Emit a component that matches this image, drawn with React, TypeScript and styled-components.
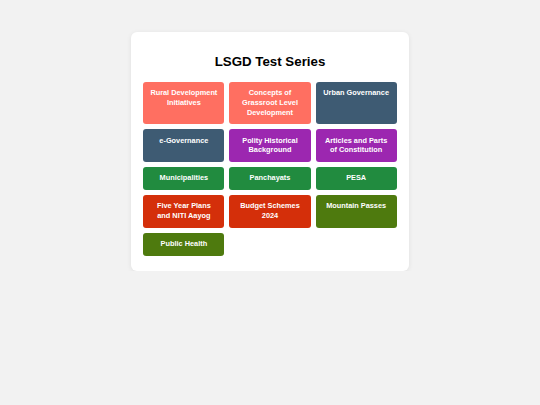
import React from 'react';
import styled, {createGlobalStyle} from 'styled-components';

type Tone = 'coral' | 'slate' | 'violet' | 'green' | 'red' | 'olive';

const tones: Record<Tone, string> = {
    coral: '#ff6f61',
    slate: '#3e5b73',
    violet: '#9c27b0',
    green: '#218b3f',
    red: '#d42f0a',
    olive: '#4e7a0e',
};

const topics: {label: string, tone: Tone}[] = [
    {label: 'Rural Development Initiatives', tone: 'coral'},
    {label: 'Concepts of Grassroot Level Development', tone: 'coral'},
    {label: 'Urban Governance', tone: 'slate'},
    {label: 'e-Governance', tone: 'slate'},
    {label: 'Polity Historical Background', tone: 'violet'},
    {label: 'Articles and Parts of Constitution', tone: 'violet'},
    {label: 'Municipalities', tone: 'green'},
    {label: 'Panchayats', tone: 'green'},
    {label: 'PESA', tone: 'green'},
    {label: 'Five Year Plans and NITI Aayog', tone: 'red'},
    {label: 'Budget Schemes 2024', tone: 'red'},
    {label: 'Mountain Passes', tone: 'olive'},
    {label: 'Public Health', tone: 'olive'},
];

const GlobalStyle = createGlobalStyle`
    html, body {
        margin: 0;
        background: #f2f2f2;
        font-family: "Liberation Sans", Arial, sans-serif;
    }
`;

const Page = styled.div`
    display: flex;
    justify-content: center;
    padding-top: 32px;
`;

const Card = styled.div`
    width: 278px;
    box-sizing: border-box;
    padding: 12px 12.3px 15.5px;
    background: #fff;
    border-radius: 6px;
    box-shadow: 0 1px 5px rgba(0, 0, 0, 0.08);
`;

const Title = styled.h1`
    margin: 10px 0 11.5px;
    font-size: 13.3px;
    line-height: 16px;
    font-weight: bold;
    color: #000;
    text-align: center;
`;

const Grid = styled.div`
    display: grid;
    grid-template-columns: repeat(3, 1fr);
    gap: 5px 5px;
`;

// label sits at the top of the tile, tiles in a row share the tallest height
const TopicButton = styled.button<{$tone: Tone}>`
    display: flex;
    align-items: flex-start;
    justify-content: center;
    padding: 6.6px 6.5px;
    border: none;
    border-radius: 3px;
    background: ${p => tones[p.$tone]};
    color: #fff;
    font-family: inherit;
    font-size: 7.35px;
    font-weight: bold;
    line-height: 9.8px;
    text-align: center;
    cursor: pointer;
`;

export default function App() {
    return (
        <>
            <GlobalStyle/>
            <Page>
                <Card>
                    <Title>LSGD Test Series</Title>
                    <Grid>
                        {topics.map(t => (
                            <TopicButton key={t.label} $tone={t.tone}>{t.label}</TopicButton>
                        ))}
                    </Grid>
                </Card>
            </Page>
        </>
    );
}
